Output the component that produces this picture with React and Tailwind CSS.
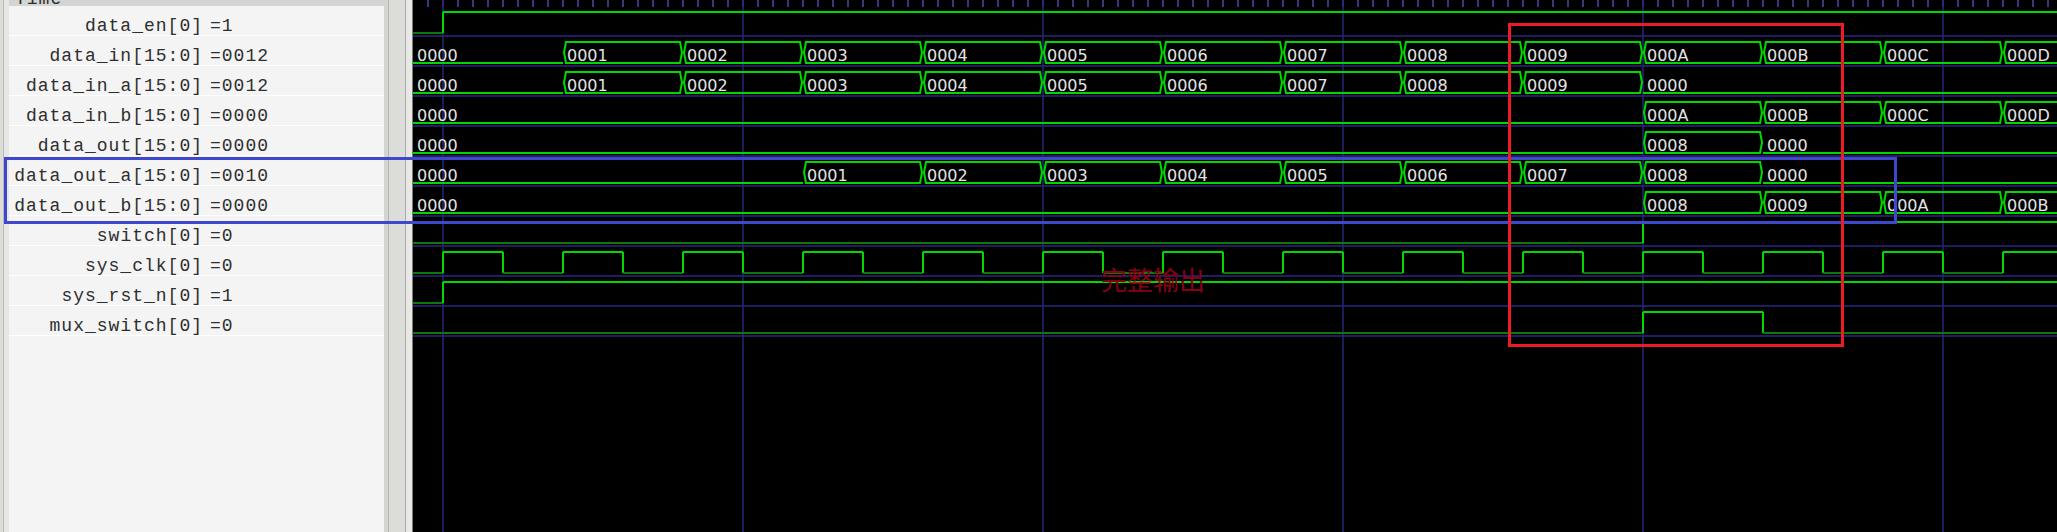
import React from 'react';

const W = 1644;
const H = 532;
const TOP = 6;
const ROW = 30;
const BRIGHT = '#00d800';
const DARK = '#0b7a0b';

const hex = (n) => n.toString(16).toUpperCase().padStart(4, '0');
const count = (from, to, start) =>
  Array.from({ length: to - from + 1 }, (_, i) => [start + i * 120, hex(from + i)]);

const clock = () => {
  const out = [[0, 0]];
  for (let k = 0; 30 + k * 60 < W; k++) out.push([30 + k * 60, k % 2 === 0 ? 1 : 0]);
  return out;
};

const signals = [
  { name: 'data_en[0]', value: '1', bit: [[0, 0], [30, 1]] },
  { name: 'data_in[15:0]', value: '0012', bus: [[0, '0000'], ...count(1, 13, 150)] },
  { name: 'data_in_a[15:0]', value: '0012', bus: [[0, '0000'], ...count(1, 9, 150), [1230, '0000']] },
  { name: 'data_in_b[15:0]', value: '0000', bus: [[0, '0000'], ...count(10, 13, 1230)] },
  { name: 'data_out[15:0]', value: '0000', bus: [[0, '0000'], [1230, '0008'], [1350, '0000']] },
  { name: 'data_out_a[15:0]', value: '0010', bus: [[0, '0000'], ...count(1, 8, 390), [1350, '0000']] },
  { name: 'data_out_b[15:0]', value: '0000', bus: [[0, '0000'], ...count(8, 11, 1230)] },
  { name: 'switch[0]', value: '0', bit: [[0, 0], [1230, 1]] },
  { name: 'sys_clk[0]', value: '0', bit: clock() },
  { name: 'sys_rst_n[0]', value: '1', bit: [[0, 0], [30, 1]] },
  { name: 'mux_switch[0]', value: '0', bit: [[0, 0], [1230, 1], [1350, 0]] },
];

function BitWave({ edges, top }) {
  const hi = top + 6;
  const lo = top + 27;
  return (
    <g>
      {edges.map(([x, lvl], i) => {
        const end = i + 1 < edges.length ? edges[i + 1][0] : W;
        return (
          <g key={i}>
            {i > 0 && <line x1={x} y1={hi} x2={x} y2={lo} stroke={BRIGHT} strokeWidth="2" />}
            <line x1={x} y1={lvl ? hi : lo} x2={end} y2={lvl ? hi : lo} stroke={lvl ? BRIGHT : DARK} strokeWidth="2" />
          </g>
        );
      })}
    </g>
  );
}

function BusWave({ segs, top }) {
  const t = top + 6;
  const b = top + 27;
  const m = (t + b) / 2;
  return (
    <g>
      {segs.map(([x, v], i) => {
        const end = i + 1 < segs.length ? segs[i + 1][0] : W + 10;
        const shape =
          v === '0000' ? (
            <line x1={x} y1={b} x2={end} y2={b} stroke={BRIGHT} strokeWidth="2" />
          ) : (
            <polygon
              points={`${x + 1},${m} ${x + 3},${t} ${end - 3},${t} ${end - 1},${m} ${end - 3},${b} ${x + 3},${b}`}
              fill="none"
              stroke={BRIGHT}
              strokeWidth="2"
            />
          );
        return (
          <g key={i}>
            {shape}
            <text x={x + 4} y={top + 25} fontFamily="DejaVu Sans, sans-serif" fontSize="16" fill="#e4e4e4">
              {v}
            </text>
          </g>
        );
      })}
    </g>
  );
}

function Waveform() {
  const ticks = Array.from({ length: Math.floor(W / 15) }, (_, i) => (i + 1) * 15);
  const grid = [30, 330, 630, 930, 1230, 1530];
  return (
    <svg width={W} height={H} viewBox={`0 0 ${W} ${H}`} className="block">
      <rect width={W} height={H} fill="#000" />
      {ticks.map((x) => (
        <line key={x} x1={x} y1="0" x2={x} y2="7" stroke="#4a4aa6" strokeWidth="1.5" />
      ))}
      {signals.map((_, i) => (
        <line key={i} x1="0" y1={TOP + ROW * (i + 1)} x2={W} y2={TOP + ROW * (i + 1)} stroke="#1e1e62" strokeWidth="2" />
      ))}
      {grid.map((x) => (
        <line key={x} x1={x} y1="0" x2={x} y2={H} stroke="#26267a" strokeWidth="1.5" />
      ))}
      {signals.map((s, i) =>
        s.bit ? (
          <BitWave key={s.name} edges={s.bit} top={TOP + ROW * i} />
        ) : (
          <BusWave key={s.name} segs={s.bus} top={TOP + ROW * i} />
        )
      )}
    </svg>
  );
}

export default function App() {
  return (
    <div className="relative flex h-[532px] w-[2057px] overflow-hidden bg-black">
      {/* left frame edge */}
      <div className="flex h-full">
        <div className="w-[3px] bg-[#dcdcd8]" />
        <div className="w-[1px] bg-[#b8b8b8]" />
        <div className="w-[5px] bg-[#e6e6e4]" />
      </div>

      {/* signal names */}
      <div className="flex h-full w-[375px] flex-col bg-[#f4f4f4] font-['Liberation_Mono',monospace] text-[18px] text-[#2e2e2e]">
        <div className="flex h-[6px] items-end overflow-hidden bg-[#d4d4d4] pl-[6px]">
          <span className="-mb-[2px] leading-none tracking-[1px]">Time</span>
        </div>
        {signals.map((s) => (
          <div key={s.name} className="flex h-[30px] shrink-0 border-b border-white pt-[10px] leading-[20px] tracking-[1px]">
            <span className="w-[194px] text-right">{s.name}</span>
            <span className="pl-[7px]">={s.value}</span>
          </div>
        ))}
      </div>

      {/* splitter */}
      <div className="flex h-full">
        <div className="w-[4px] bg-[#d4d4d0]" />
        <div className="w-[1px] bg-[#b4b4b4]" />
        <div className="w-[16px] bg-[#dcdcd8]" />
        <div className="w-[1px] bg-[#a8a8a8]" />
        <div className="w-[6px] bg-[#e8e8e4]" />
        <div className="w-[1px] bg-[#7c7c7c]" />
      </div>

      <div className="w-[1644px]">
        <Waveform />
      </div>

      {/* annotations */}
      <div className="absolute left-[4px] top-[157px] h-[67px] w-[1893px] border-[3px] border-[#3f48cc]" />
      <div className="absolute left-[1508px] top-[23px] h-[324px] w-[336px] border-[3px] border-[#ed1c24]" />
      <div className="absolute left-[1101px] top-[266px] font-['Noto_Sans_CJK_SC',sans-serif] text-[26px] leading-none text-[#880015]">
        完整输出
      </div>
    </div>
  );
}
